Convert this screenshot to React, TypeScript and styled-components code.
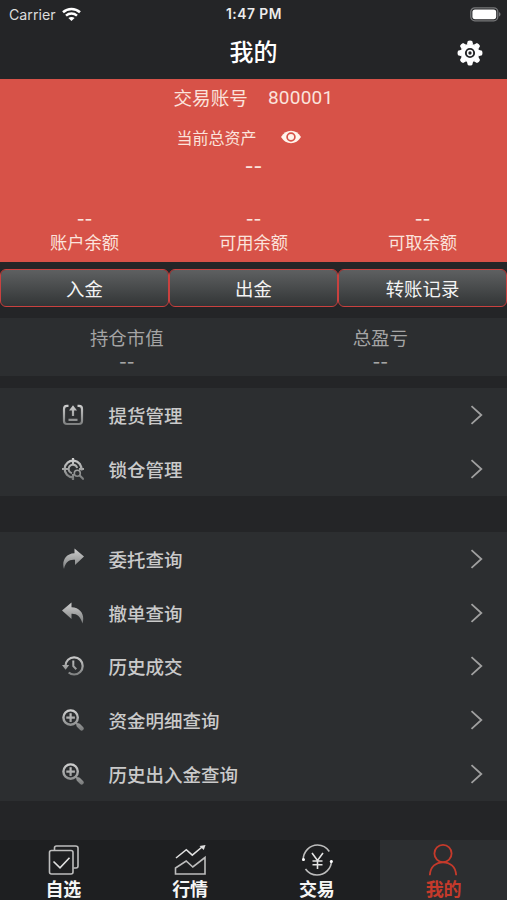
import React from "react";
import styled, { createGlobalStyle } from "styled-components";

const GlobalStyle = createGlobalStyle`
  * { box-sizing: border-box; }
  body { margin: 0; background: #242527; }
  button { font: inherit; }
`;

const Screen = styled.div`
  width: 507px;
  height: 900px;
  display: flex;
  flex-direction: column;
  background: #242527;
  color: #fff;
  font-family: "Noto Sans CJK SC", sans-serif;
`;

const StatusBar = styled.div`
  height: 27px;
  padding: 0 6px 0 9px;
  display: grid;
  grid-template-columns: 1fr auto 1fr;
  align-items: center;
  font-family: Inter, sans-serif;
  font-size: 14px;
  line-height: 27px;
  color: #ececec;
`;

const Carrier = styled.div`
  display: flex;
  align-items: center;
  gap: 6px;
  font-size: 14.2px;
  color: #dcdcdc;
`;

const Clock = styled.div`
  margin-right: 2px;
  padding-top: 1px;
  font-size: 13.8px;
  font-weight: 600;
  letter-spacing: 0.5px;
`;

const BatterySlot = styled.div`
  display: flex;
  justify-content: flex-end;
`;

const NavBar = styled.header`
  height: 52px;
  padding: 0 24px;
  display: grid;
  grid-template-columns: 1fr auto 1fr;
  align-items: center;
`;

const Title = styled.h1`
  grid-column: 2;
  margin: 0;
  padding-bottom: 4px;
  font-size: 24px;
  line-height: 44px;
  font-weight: 500;
`;

const IconButton = styled.button`
  justify-self: end;
  display: flex;
  padding: 0 0 1px;
  border: 0;
  background: none;
  color: #fff;
`;

const Summary = styled.section`
  height: 183px;
  display: flex;
  flex-direction: column;
  align-items: center;
  background: #d75248;
  color: #fbe3dc;
`;

const AccountLine = styled.div`
  display: flex;
  gap: 20px;
  padding-top: 4px;
  font-size: 18.6px;
  line-height: 28px;
`;

const AccountNumber = styled.span`
  padding-top: 1px;
  font-family: Roboto, sans-serif;
  font-size: 19px;
  line-height: 27px;
  letter-spacing: 0.25px;
`;

const AssetLine = styled.div`
  display: flex;
  align-items: center;
  gap: 24px;
  height: 24px;
  margin: 14px 0 8px;
  padding-right: 30px;
  font-size: 16px;
  line-height: 22px;
`;

const Dashes = styled.div<{ $size?: number }>`
  font-family: Inter, sans-serif;
  font-size: ${({ $size = 17 }) => $size}px;
  font-weight: 500;
  line-height: 20px;
`;

const Balances = styled.div`
  align-self: stretch;
  display: grid;
  grid-template-columns: repeat(3, 1fr);
  margin-top: auto;
  padding-bottom: 8px;
  text-align: center;
`;

const BalanceLabel = styled.div`
  font-size: 17.3px;
  line-height: 25px;
`;

const Actions = styled.div`
  display: grid;
  grid-template-columns: repeat(3, 1fr);
  margin: 7px 0 11px;
`;

const ActionButton = styled.button`
  height: 38px;
  padding: 0;
  border: 1.5px solid #c9413f;
  border-radius: 6px;
  background: linear-gradient(#5e6061, #323536) padding-box;
  color: #f4f4f4;
  font-size: 18.4px;
  line-height: 34px;
`;

const Holdings = styled.section`
  height: 58px;
  display: grid;
  grid-template-columns: 1fr 1fr;
  background: #2c2e30;
  text-align: center;
  color: #a5a5a5;
`;

const HoldingLabel = styled.div`
  padding: 5px 0 1px;
  font-size: 18.4px;
  line-height: 28px;
`;

const Menu = styled.nav<{ $gap: number }>`
  margin-top: ${({ $gap }) => $gap}px;
  background: #2c2e30;
`;

const MenuRow = styled.div`
  height: 53.8px;
  display: grid;
  grid-template-columns: 22px 1fr 14px;
  column-gap: 24.5px;
  align-items: center;
  padding: 0 23px 0 62px;
  color: #cacaca;
  font-size: 18.5px;
  font-weight: 500;
  line-height: 28px;
`;

const TabBar = styled.footer`
  height: 60px;
  margin-top: auto;
  display: grid;
  grid-template-columns: repeat(4, 1fr);
  background: #1e1f21;
`;

const Tab = styled.div<{ $active?: boolean }>`
  display: flex;
  flex-direction: column;
  align-items: center;
  padding-top: 3px;
  background: ${({ $active }) => ($active ? "#2c2e30" : "#1e1f21")};
  color: ${({ $active }) => ($active ? "#c53a2b" : "#f5f5f5")};
`;

const TabLabel = styled.span`
  font-size: 18px;
  font-weight: 700;
  line-height: 22px;
`;

function Wifi() {
  return (
    <svg width="19" height="15" viewBox="0 0 19 15" fill="none" stroke="#fff" strokeWidth="2.5">
      <path d="M1 5.2C5.8.9 13.2.9 18 5.2M4 8.6c3.2-2.8 7.8-2.8 11 0" />
      <path d="M6.4 11c1.8-1.5 4.4-1.5 6.2 0L9.5 14Z" fill="#fff" stroke="none" />
    </svg>
  );
}

function Battery() {
  return (
    <svg width="31" height="15" viewBox="0 0 31 15">
      <rect x="0.8" y="0.8" width="27" height="13" rx="4" fill="none" stroke="#77787a" strokeWidth="1.3" />
      <rect x="2.4" y="2.4" width="23.8" height="9.8" rx="2.6" fill="#fff" />
      <path d="M29 5.2c2 .7 2 3.5 0 4.2Z" fill="#77787a" />
    </svg>
  );
}

function Gear() {
  const teeth = [0, 45, 90, 135, 180, 225, 270, 315];
  return (
    <svg width="26" height="26" viewBox="-13 -13 26 26">
      <circle r="7.2" fill="none" stroke="#fff" strokeWidth="4.2" />
      {teeth.map((a) => (
        <path key={a} d="M-3.2-8.5-2.2-12q2.2-1 4.4 0L3.2-8.5Z" fill="#fff" transform={`rotate(${a})`} />
      ))}
      <circle r="2.4" fill="none" stroke="#fff" strokeWidth="1.5" />
    </svg>
  );
}

function Eye() {
  return (
    <svg width="20" height="14" viewBox="0 0 20 14">
      <path d="M0 7Q4 .8 10 .8T20 7q-4 6.2-10 6.2T0 7Z" fill="#fff4ec" />
      <circle cx="10" cy="7" r="3.9" fill="none" stroke="#d75248" strokeWidth="1.7" />
    </svg>
  );
}

function Chevron() {
  return (
    <svg width="14" height="20" viewBox="0 0 14 20" fill="none" stroke="#a0a0a0" strokeWidth="1.8">
      <path d="m1.5 1.2 9.8 8.8-9.8 8.8" />
    </svg>
  );
}

type MenuIconName = "pickup" | "lock" | "forward" | "back" | "history" | "search";

function MenuIcon({ name }: { name: MenuIconName }) {
  const shade = `url(#shade-${name})`;
  return (
    <svg width="22" height="22" viewBox="0 0 22 22" fill="none" stroke={shade} strokeWidth="2.2">
      <defs>
        <linearGradient id={`shade-${name}`} gradientUnits="userSpaceOnUse" x1="0" y1="0" x2="0" y2="22">
          <stop offset="0" stopColor="#d2d2d2" />
          <stop offset="1" stopColor="#777979" />
        </linearGradient>
      </defs>
      {name === "pickup" && (
        <>
          <path d="M6.5 1.8H5Q2 1.8 2 5v12q0 3 3 3h12q3 0 3-3V5q0-3.2-3-3.2h-1.5" />
          <path d="M11 12V4M6.5 15.8h9" />
          <path d="m11 1.2 4 5.2H7Z" fill={shade} stroke="none" />
        </>
      )}
      {name === "lock" && (
        <>
          <path d="M19.3 12.5a8.4 8.4 0 1 0-8.3 6.9M11 0v6.3M0 11h6.3M22 11h-5M11 22v-6" />
          <path d="M10 15.2A4.3 4.3 0 1 1 15.2 10" strokeWidth="1.9" />
          <circle cx="15.3" cy="15.2" r="3" strokeWidth="1.6" />
          <path d="m17.5 17.3 4.3 4.2" />
        </>
      )}
      {name === "forward" && (
        <path d="M12.5.5 22 8.5l-9 8.5v-5.2C7.5 11 3.5 13.8 2 21-.2 15 2.2 5.6 12.5 5.2Z" fill={shade} stroke="none" />
      )}
      {name === "back" && (
        <path d="M9.5.5 0 8.5 9.5 17v-5.3c5-.3 9.3 2.6 10.9 9.8C23 14 19.5 5.6 9.5 5.2Z" fill={shade} stroke="none" />
      )}
      {name === "history" && (
        <>
          <path d="M3.5 10.8a8.6 8.6 0 1 1 8.6 8.7c-2 0-4-.7-5.4-2" />
          <path d="M0 10h7.2l-3.6 4.7Z" fill={shade} stroke="none" />
          <path d="M11.3 5.5v5.7l3 3" strokeWidth="2" />
        </>
      )}
      {name === "search" && (
        <>
          <circle cx="8.6" cy="8.6" r="7.2" strokeWidth="2.4" />
          <path d="M8.6 4.3v8.6M4.3 8.6h8.6" />
          <path d="m13.5 13.5 2.2 2.2" strokeWidth="1.8" />
          <path d="m16.6 16.6 3 3" strokeWidth="4.2" strokeLinecap="round" />
        </>
      )}
    </svg>
  );
}

type TabIconName = "pick" | "market" | "trade" | "mine";

function TabIcon({ name }: { name: TabIconName }) {
  return (
    <svg width="34" height="34" viewBox="0 0 34 34" fill="none" stroke="#bdbdbd" strokeWidth="1.6">
      {name === "pick" && (
        <>
          <rect x="3.5" y="7.5" width="23.5" height="23.5" rx="2" />
          <path d="M8.5 7V5q0-2 2-2h19q2.5 0 2.5 2v18q0 2-2 2h-2.5" />
          <path d="m7.5 18.5 6.5 6.3 9.5-10" stroke="#e0e0e0" />
        </>
      )}
      {name === "market" && (
        <>
          <path d="m3 15 10.3-8.3 6 5.5L29 4" stroke="#e0e0e0" />
          <path d="m26.5 3 6-1-1.7 5Z" fill="#e0e0e0" stroke="none" />
          <path d="M2.5 31V25l10.7-7 6.6 6 12.2-9.5V31Z" />
        </>
      )}
      {name === "trade" && (
        <>
          <path d="M3.2 17.5C2.8 8.5 10 2 17.5 2c5 0 9.3 2.7 11.8 6.5M31.5 17c.3 9-7 15-14.5 15-4.8 0-9-2.4-11.5-6" />
          <circle cx="3.5" cy="16.5" r="1.5" fill="#fff" stroke="none" />
          <circle cx="31.3" cy="18.5" r="1.5" fill="#fff" stroke="none" />
          <path d="m12 10 5.5 7.5L23 10M17.5 17.5V26M12.5 18h10M12.5 21.7h10" stroke="#e4e4e4" />
        </>
      )}
      {name === "mine" && (
        <g stroke="#c53a2b" strokeWidth="1.8">
          <circle cx="16" cy="10.5" r="8.6" />
          <path d="M2.8 32.3c.5-9 6.4-13 13.2-13s12.7 4 13.2 13" />
        </g>
      )}
    </svg>
  );
}

const managementItems: { icon: MenuIconName; label: string }[] = [
  { icon: "pickup", label: "提货管理" },
  { icon: "lock", label: "锁仓管理" },
];

const queryItems: { icon: MenuIconName; label: string }[] = [
  { icon: "forward", label: "委托查询" },
  { icon: "back", label: "撤单查询" },
  { icon: "history", label: "历史成交" },
  { icon: "search", label: "资金明细查询" },
  { icon: "search", label: "历史出入金查询" },
];

const tabs: { icon: TabIconName; label: string }[] = [
  { icon: "pick", label: "自选" },
  { icon: "market", label: "行情" },
  { icon: "trade", label: "交易" },
  { icon: "mine", label: "我的" },
];

function MenuGroup({ items, gap }: { items: typeof queryItems; gap: number }) {
  return (
    <Menu $gap={gap}>
      {items.map((item) => (
        <MenuRow key={item.label}>
          <MenuIcon name={item.icon} />
          <span>{item.label}</span>
          <Chevron />
        </MenuRow>
      ))}
    </Menu>
  );
}

export default function App() {
  return (
    <>
      <GlobalStyle />
      <Screen>
        <StatusBar>
          <Carrier>
            Carrier
            <Wifi />
          </Carrier>
          <Clock>1:47 PM</Clock>
          <BatterySlot>
            <Battery />
          </BatterySlot>
        </StatusBar>
        <NavBar>
          <Title>我的</Title>
          <IconButton aria-label="设置">
            <Gear />
          </IconButton>
        </NavBar>
        <Summary>
          <AccountLine>
            <span>交易账号</span>
            <AccountNumber>800001</AccountNumber>
          </AccountLine>
          <AssetLine>
            <span>当前总资产</span>
            <Eye />
          </AssetLine>
          <Dashes $size={19}>--</Dashes>
          <Balances>
            {["账户余额", "可用余额", "可取余额"].map((label) => (
              <div key={label}>
                <Dashes>--</Dashes>
                <BalanceLabel>{label}</BalanceLabel>
              </div>
            ))}
          </Balances>
        </Summary>
        <Actions>
          {["入金", "出金", "转账记录"].map((label) => (
            <ActionButton key={label}>{label}</ActionButton>
          ))}
        </Actions>
        <Holdings>
          {["持仓市值", "总盈亏"].map((label) => (
            <div key={label}>
              <HoldingLabel>{label}</HoldingLabel>
              <Dashes>--</Dashes>
            </div>
          ))}
        </Holdings>
        <MenuGroup items={managementItems} gap={12} />
        <MenuGroup items={queryItems} gap={36.4} />
        <TabBar>
          {tabs.map((tab) => (
            <Tab key={tab.label} $active={tab.icon === "mine"}>
              <TabIcon name={tab.icon} />
              <TabLabel>{tab.label}</TabLabel>
            </Tab>
          ))}
        </TabBar>
      </Screen>
    </>
  );
}
